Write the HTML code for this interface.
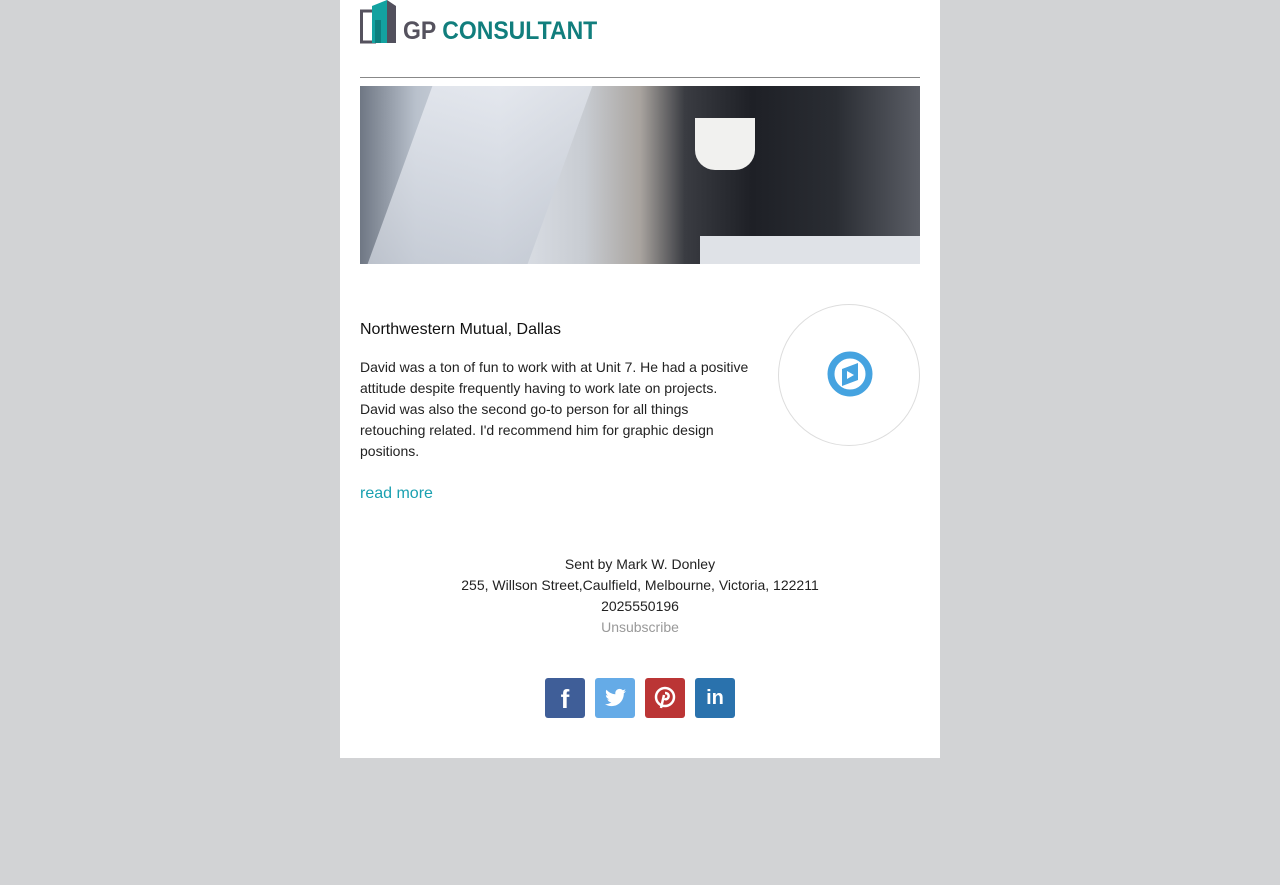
<!DOCTYPE html>
<html><head><meta charset="utf-8"><style>
body{margin:0;background:#d2d3d5;font-family:"Liberation Sans",sans-serif;}
.wrap{position:absolute;left:340px;top:0;width:600px;height:758px;background:#fff;}
.hr{position:absolute;left:20px;top:77px;width:560px;height:1px;background:#888;}
.photo{position:absolute;left:20px;top:86px;width:560px;height:178px;overflow:hidden;
background:linear-gradient(90deg,#6f7784 0%,#b9c1cc 10%,#dfe3ea 25%,#c8ccd2 40%,#a9a49f 50%,#3a3c42 58%,#1e2026 70%,#2a2d33 85%,#5b5e66 100%);}
.t{position:absolute;color:#111;}
.soc{position:absolute;top:678px;width:40px;height:40px;border-radius:3px;}
</style></head><body>
<div class="wrap">
<svg style="position:absolute;left:20px;top:0" width="40" height="44" viewBox="0 0 40 44">
<rect x="1.5" y="11" width="13" height="31" fill="none" stroke="#55525e" stroke-width="3"/>
<polygon points="12,6 27,0 27,43 12,43" fill="#13a2a0"/>
<polygon points="27,0 36,6 36,43 27,43" fill="#52505d"/>
<rect x="15" y="20" width="6" height="23" fill="#0e7f7e"/>
</svg>
<div class="t" style="left:63px;top:16px;font-size:25px;font-weight:bold;line-height:30px;transform:scaleX(0.92);transform-origin:left"><span style="color:#55525e">GP </span><span style="color:#117e7d">CONSULTANT</span></div>
<div class="hr"></div>
<div class="photo">
<div style="position:absolute;left:40px;top:0;width:160px;height:178px;background:linear-gradient(160deg,#e9ecf2,#c3c9d3);transform:skewX(-20deg);opacity:.8"></div>
<div style="position:absolute;left:335px;top:32px;width:60px;height:52px;background:#f1f1ef;border-radius:0 0 20px 20px"></div>
<div style="position:absolute;left:340px;top:150px;width:220px;height:28px;background:#dfe2e7"></div>
</div>
<div class="t" style="left:20px;top:321px;font-size:16px">Northwestern Mutual, Dallas</div>
<div class="t" style="left:20px;top:357px;width:394px;font-size:14px;line-height:21px;color:#222">David was a ton of fun to work with at Unit 7. He had a positive attitude despite frequently having to work late on projects. David was also the second go-to person for all things retouching related. I'd recommend him for graphic design positions.</div>
<div class="t" style="left:20px;top:485px;font-size:16px;color:#1aa0b0">read more</div>
<div style="position:absolute;left:438px;top:304px;width:140px;height:140px;border:1px solid #ddd;border-radius:50%"></div>
<svg style="position:absolute;left:487px;top:351px" width="46" height="46" viewBox="0 0 46 46">
<circle cx="23" cy="23" r="19" fill="none" stroke="#45a3e0" stroke-width="7"/>
<polygon points="15,18 31,12 31,29 15,35" fill="#45a3e0"/>
<polygon points="20,20 27,24 20,28" fill="#fff"/>
</svg>
<div class="t" style="left:0;width:600px;top:554px;text-align:center;font-size:14px;line-height:21px;color:#222">Sent by Mark W. Donley<br>255, Willson Street,Caulfield, Melbourne, Victoria, 122211<br>2025550196<br><span style="color:#999">Unsubscribe</span></div>
<div class="soc" style="left:205px;background:#3f5e98"><div style="color:#fff;font-weight:bold;font-size:26px;text-align:center;line-height:42px">f</div></div>
<div class="soc" style="left:255px;background:#65abe7"><svg width="40" height="40" viewBox="0 0 40 40"><path d="M31 13c-.8.4-1.6.6-2.5.7.9-.5 1.6-1.4 1.9-2.4-.8.5-1.800.8-2.7 1-.8-.9-1.9-1.4-3.1-1.400-2.4 0-4.3 1.9-4.3 4.300 0 .3 0 .7.1 1-3.6-.2-6.8-1.9-8.900-4.500-.4.6-.6 1.4-.6 2.2 0 1.5.8 2.8 1.9 3.6-.7 0-1.4-.2-1.9-.5 0 2.1 1.5 3.8 3.4 4.2-.6.2-1.3.2-1.9.1.5 1.7 2.1 3 4 3-1.5 1.2-3.3 1.9-5.3 1.9H10c1.9 1.2 4.2 1.9 6.6 1.9 7.9 0 12.2-6.5 12.2-12.2v-.6c.9-.6 1.6-1.4 2.2-2.3z" fill="#fff"/></svg></div>
<div class="soc" style="left:305px;background:#bb3535"><svg width="40" height="40" viewBox="0 0 40 40"><circle cx="20" cy="19" r="9" fill="none" stroke="#fff" stroke-width="2.5"/><path d="M20 15c3 0 4 2 3.5 4s-3 3-4 1.5M19 17l-3 13" stroke="#fff" stroke-width="2.5" fill="none"/></svg></div>
<div class="soc" style="left:355px;background:#2a72ad"><div style="color:#fff;font-weight:bold;font-size:20px;text-align:center;line-height:40px">in</div></div>
</div>
</body></html>
